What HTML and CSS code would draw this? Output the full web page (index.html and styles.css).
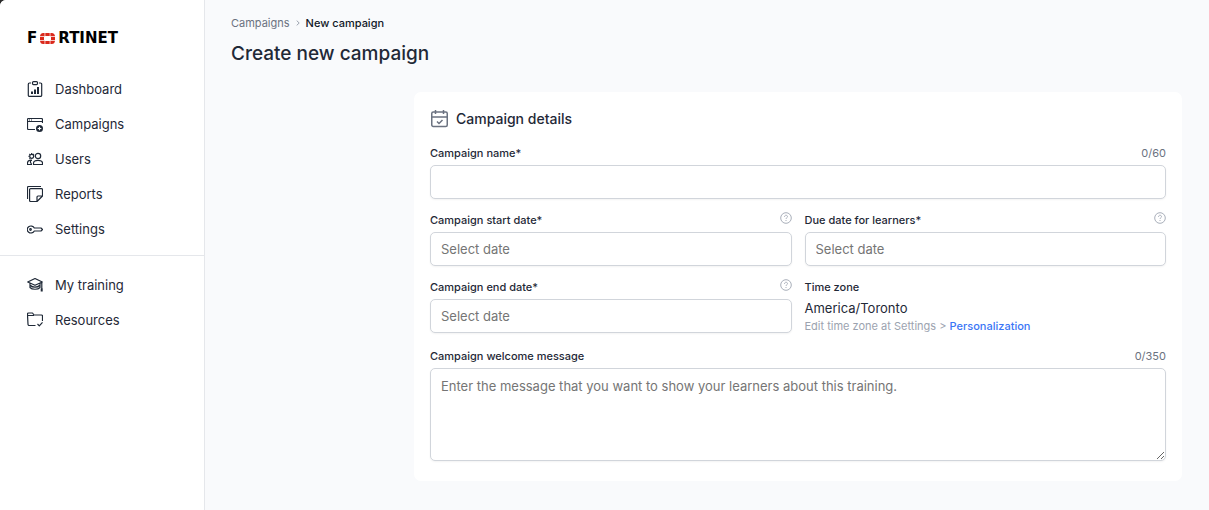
FILE: index.html
```html
<!DOCTYPE html>
<html lang="en">

<head>
    <meta charset="UTF-8">
    <meta name="viewport" content="width=device-width, initial-scale=1.0">
    <title>Create new campaign</title>
    <link rel="stylesheet" href="styles.css">
</head>
<body>
    <div class="layout">
        <aside class="sidebar">
            <a class="logo" href="#">
                <span>F</span>
                <svg class="logo-mark" viewBox="0 0 15 11">
                    <path d="M5.300 0h4.400v3H5.300zM5.300 8h4.400v3H5.300zM0 4h4v3H0zM11 4h4v3h-4zM4.600 0v3.300H0C.1 1.300 1.300 0 3.200 0zM10.400 0v3.300H15C14.900 1.300 13.700 0 11.800 0zM4.600 11V7.700H0C.1 9.700 1.300 11 3.200 11zM10.400 11V7.700H15c-.1 2-1.300 3.300-3.200 3.300z"/>
                </svg>
                <span>RTINET</span>
            </a>
            <nav>
                <ul class="menu">
                    <li><a href="#">
                        <svg class="icon" viewBox="0 0 16 16">
                            <path d="M4 2H2.500A1.200 1.200 0 0 0 1.300 3.200v11a1.200 1.200 0 0 0 1.200 1.200h11a1.200 1.200 0 0 0 1.200-1.200v-11A1.200 1.200 0 0 0 13.500 2H12"/>
                            <rect x="5.500" y=".6" width="5" height="3" rx="1"/>
                            <path class="fill" d="M4 10.500h2V13H4zM7 8.500h2V13H7zM10 6h2v7h-2z"/>
                        </svg>
                        Dashboard</a></li>
                    <li><a href="#">
                        <svg class="icon" viewBox="0 0 16 16">
                            <path d="M8 13.500H1.500a1 1 0 0 1-1-1v-9a1 1 0 0 1 1-1h13a1 1 0 0 1 1 1V7M.5 5.500h15M2 4h1M4 4h1"/>
                            <circle class="fill" cx="12.500" cy="12.500" r="3.500"/>
                            <path class="light" d="M12.500 10.700v3.600M10.700 12.500h3.600"/>
                        </svg>
                        Campaigns</a></li>
                    <li><a href="#">
                        <svg class="icon" viewBox="0 0 16 16">
                            <circle cx="11" cy="5" r="2.700"/>
                            <circle cx="4.700" cy="5.300" r="2"/>
                            <path d="M4.700 2v1.200M1.500 5.300h1M2.400 3l.8.800M7 3l-.8.800M2.400 7.600l.8-.8"/>
                            <path d="M6.500 13.500v-1.300c0-1.700 1.500-2.900 4.500-2.900s4.500 1.200 4.500 2.900v1.300zM5 13.500H.5v-1.300C.5 10.500 1.700 9.300 4 9.200l1 .2M3.500 9.500v2l1 1.500"/>
                        </svg>
                        Users</a></li>
                    <li><a href="#">
                        <svg class="icon" viewBox="0 0 16 16">
                            <path d="M.5 13V1.500a1 1 0 0 1 1-1H14"/>
                            <path d="M10 15.500H3.600a1 1 0 0 1-1-1V3.600a1 1 0 0 1 1-1h10.900a1 1 0 0 1 1 1V10zM10 15.500V11a1 1 0 0 1 1-1h4.500"/>
                        </svg>
                        Reports</a></li>
                    <li><a href="#">
                        <svg class="icon" viewBox="0 0 16 16">
                            <path d="M7.300 7A3.700 3.500 0 1 0 7.300 10H14l1.500-1.500L14 7z"/>
                            <circle cx="3.500" cy="8.500" r=".8"/>
                        </svg>
                        Settings</a></li>
                </ul>
                <ul class="menu menu-secondary">
                    <li><a href="#">
                        <svg class="icon" viewBox="0 0 16 16">
                            <path d="M.7 5L8 1.500 15.300 5 8 8.300zM3 6.500v4c2 2.300 8 2.300 10 0v-4M3.500 8.500c2 2.200 7 2.200 9 0M14.800 5v7"/>
                            <path class="fill" d="M13.700 11.500h2v3h-2z"/>
                        </svg>
                        My training</a></li>
                    <li><a href="#">
                        <svg class="icon" viewBox="0 0 16 16">
                            <path d="M8.500 13.500H2.200a1.200 1.200 0 0 1-1.200-1.200L.5 3V2a1 1 0 0 1 1-1h4l1.500 2h7.500a1 1 0 0 1 1 1v5M.6 3.500H7M10.500 12l1.800 1.800 3.200-3.500"/>
                        </svg>
                        Resources</a></li>
                </ul>
            </nav>
        </aside>

        <main class="content">
            <nav class="breadcrumb">
                <a href="#">Campaigns</a>
                <svg class="chevron" viewBox="0 0 4 6"><path d="M.7.6L3.200 3 .7 5.400"/></svg>
                <span class="current">New campaign</span>
            </nav>
            <h1>Create new campaign</h1>

            <form class="card">
                <h2>
                    <svg class="calendar" viewBox="0 0 18 18">
                        <rect x="1.750" y="2" width="15.500" height="14.500" rx="1.500"/>
                        <path d="M1.500 7h16M5.500 0v4M13.500 0v4M7 11.500l2 2 3.500-3.500"/>
                    </svg>
                    Campaign details
                </h2>

                <div class="form-grid">
                    <div class="field wide">
                        <div class="field-head">
                            <label for="name">Campaign name*</label>
                            <span class="counter">0/60</span>
                        </div>
                        <input type="text" id="name" maxlength="60">
                    </div>
                    <div class="field">
                        <div class="field-head">
                            <label for="start-date">Campaign start date*</label>
                            <svg class="help" viewBox="0 0 12 12"><circle cx="6" cy="6" r="5.300"/><path d="M4.500 4.800c0-2 3-2 3-.2C7.500 5.800 6 5.800 6 7M6 8v1"/></svg>
                        </div>
                        <input type="text" id="start-date" placeholder="Select date">
                    </div>
                    <div class="field">
                        <div class="field-head">
                            <label for="due-date">Due date for learners*</label>
                            <svg class="help" viewBox="0 0 12 12"><circle cx="6" cy="6" r="5.300"/><path d="M4.500 4.800c0-2 3-2 3-.2C7.500 5.800 6 5.800 6 7M6 8v1"/></svg>
                        </div>
                        <input type="text" id="due-date" placeholder="Select date">
                    </div>
                    <div class="field">
                        <div class="field-head">
                            <label for="end-date">Campaign end date*</label>
                            <svg class="help" viewBox="0 0 12 12"><circle cx="6" cy="6" r="5.300"/><path d="M4.500 4.800c0-2 3-2 3-.2C7.500 5.800 6 5.800 6 7M6 8v1"/></svg>
                        </div>
                        <input type="text" id="end-date" placeholder="Select date">
                    </div>
                    <div class="field">
                        <div class="field-head">
                            <span class="field-title">Time zone</span>
                        </div>
                        <p class="timezone">America/Toronto</p>
                        <p class="hint">Edit time zone at Settings &gt; <a href="#">Personalization</a></p>
                    </div>
                    <div class="field wide">
                        <div class="field-head">
                            <label for="message">Campaign welcome message</label>
                            <span class="counter">0/350</span>
                        </div>
                        <textarea id="message" maxlength="350" placeholder="Enter the message that you want to show your learners about this training."></textarea>
                    </div>
                </div>
            </form>
        </main>
    </div>
</body>
</html>
```
FILE: styles.css
```css
:root {
    --page-bg: #f9fafc;
    --text-color: #1f2937;
    --muted-color: #6b7280;
    --light-color: #9ca3af;
    --border-color: #d1d5db;
    --line-color: #e5e7eb;
    --link-color: #3b76f6;
}

* {
    box-sizing: border-box;
}
html {
    background-color: #2b2b2b;
}
body {
    margin: 0;
    font-family: Inter, "Liberation Sans", sans-serif;
    font-size: 13px;
    color: var(--text-color);
}
a {
    color: inherit;
    text-decoration: none;
}
h1, h2, p, ul {
    margin: 0;
    padding: 0;
}
svg {
    flex: none;
}

.layout {
    display: flex;
    min-height: 100vh;
    background-color: var(--page-bg);
    border-top-left-radius: 6px;
    overflow: hidden;
}

/* sidebar */
.sidebar {
    flex: none;
    width: 205px;
    background-color: white;
    border-right: 1px solid var(--line-color);
}
.logo {
    display: flex;
    align-items: center;
    gap: 2px;
    padding: 28px 27px 0;
    font-family: "DejaVu Sans", sans-serif;
    font-size: 15px;
    font-weight: bold;
    line-height: 20px;
    color: black;
}
.logo-mark {
    width: 17px;
    height: 11px;
    fill: #da291c;
}
.menu {
    list-style: none;
    padding: 23px 0 9px;
}
.menu a {
    display: flex;
    align-items: center;
    gap: 12px;
    height: 35px;
    padding: 0 27px;
}
.menu-secondary {
    padding-top: 11px;
    border-top: 1px solid var(--line-color);
}
.icon {
    width: 16px;
    height: 16px;
    fill: none;
    stroke: var(--text-color);
    stroke-width: 1.2;
    stroke-linejoin: round;
}
.icon .fill {
    fill: var(--text-color);
    stroke: none;
}
.icon .light {
    stroke: white;
}

/* main column */
.content {
    flex: 1;
    min-width: 0;
    padding: 15px 27px 29px 26px;
}
.breadcrumb {
    display: flex;
    align-items: center;
    gap: 6px;
    font-size: 11px;
    line-height: 16px;
    color: var(--muted-color);
}
.breadcrumb .current {
    font-weight: 500;
    color: #111827;
}
.chevron {
    width: 4px;
    height: 6px;
    fill: none;
    stroke: var(--light-color);
}
h1 {
    margin-top: 9px;
    font-size: 19px;
    font-weight: 500;
    line-height: 28px;
}

.card {
    max-width: 768px;
    margin: 24px 0 0 auto;
    padding: 16px 16px 20px;
    background-color: white;
    border-radius: 7px;
}
h2 {
    display: flex;
    align-items: center;
    gap: 8px;
    font-size: 14px;
    font-weight: 500;
    line-height: 22px;
}
.calendar {
    width: 18px;
    height: 18px;
    fill: none;
    stroke: var(--muted-color);
    stroke-width: 1.5;
}
.form-grid {
    display: grid;
    grid-template-columns: 1fr 1fr;
    gap: 13px;
    margin-top: 15px;
}
.wide {
    grid-column: 1 / -1;
}
.field-head {
    display: flex;
    justify-content: space-between;
    margin-bottom: 4px;
    font-size: 11px;
    line-height: 16px;
}
label, .field-title {
    font-weight: 500;
}
.counter {
    color: var(--muted-color);
}
.help {
    width: 12px;
    height: 12px;
    fill: none;
    stroke: #a9afba;
}
input, textarea {
    display: block;
    width: 100%;
    height: 34px;
    padding: 0 10px;
    font: inherit;
    color: inherit;
    background-color: white;
    border: 1px solid var(--border-color);
    border-radius: 5px;
    box-shadow: 0 1px 2px rgba(0, 0, 0, 0.05);
}
textarea {
    height: 93px;
    padding: 8px 10px;
    line-height: 18px;
    resize: vertical;
}
::placeholder {
    color: #757575;
}
.timezone {
    line-height: 18px;
}
.hint {
    font-size: 11px;
    line-height: 18px;
    color: var(--light-color);
}
.hint a {
    font-weight: 500;
    color: var(--link-color);
}
```
